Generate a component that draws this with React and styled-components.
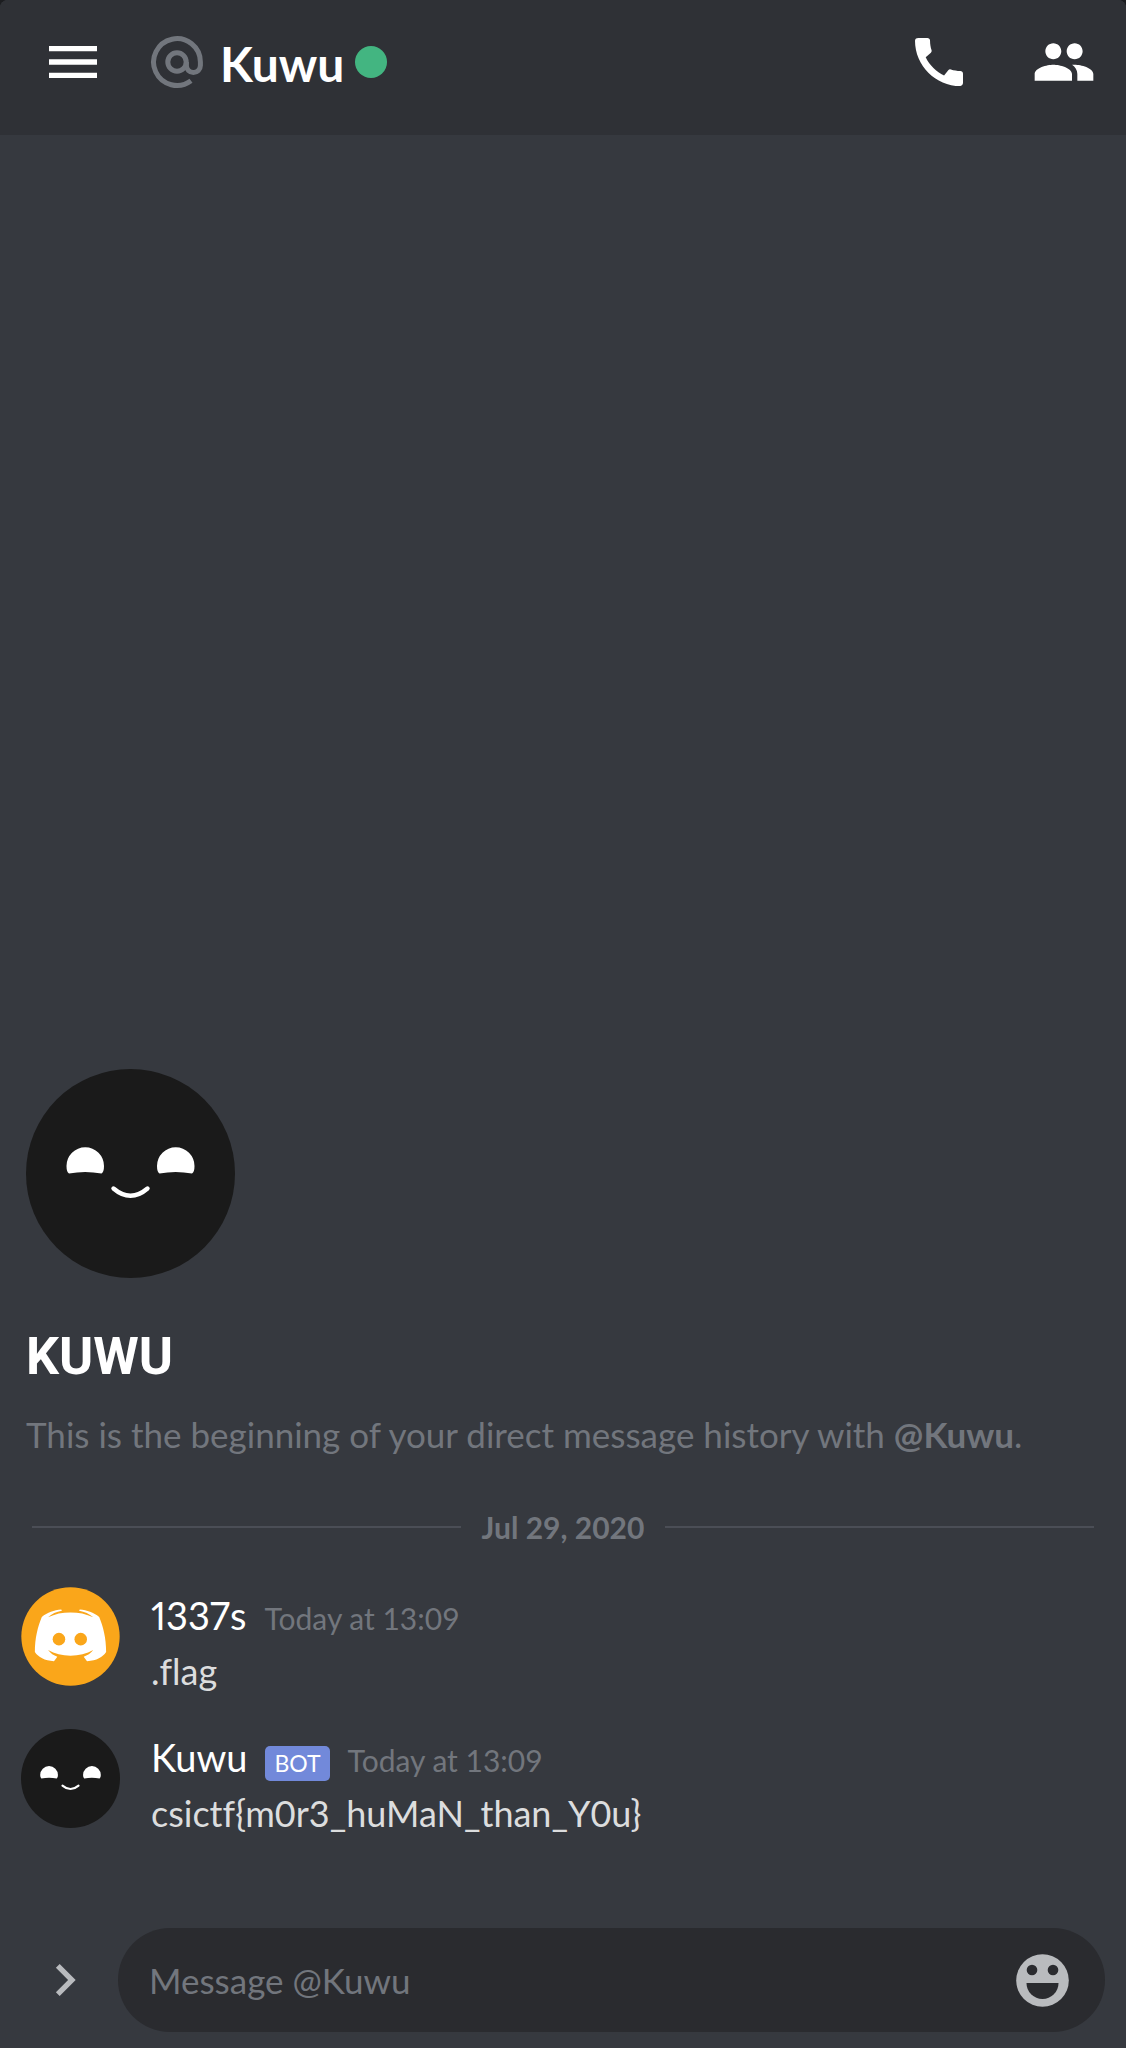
import React from "react";
import styled, { createGlobalStyle } from "styled-components";
import { MdMenu, MdCall, MdPeople, MdChevronRight } from "react-icons/md";

const color = {
  header: "#2f3136",
  chat: "#36393f",
  field: "#2a2b2f",
  rule: "#4b4e56",
  muted: "#72767d",
  text: "#dcddde",
  icon: "#b9bbbe",
  white: "#ffffff",
  online: "#43b581",
  blurple: "#7289da",
  amber: "#faa61a",
  ink: "#1a1a1a",
};

const GlobalStyle = createGlobalStyle`
  *, *::before, *::after { box-sizing: border-box; }
  body {
    margin: 0;
    background: #1c1d20;
    color: ${color.text};
    font-family: Lato, "Open Sans", sans-serif;
    font-variant-ligatures: none;
  }
`;

const Screen = styled.div`
  display: flex;
  flex-direction: column;
  min-height: 100vh;
  overflow: hidden;
  border-radius: 8px 8px 0 0;
  background: ${color.chat};
`;

const Header = styled.header`
  display: flex;
  align-items: center;
  gap: 40px;
  padding: 30px 30px 41px 41px;
  background: ${color.header};
`;

const IconButton = styled.button`
  display: flex;
  flex: none;
  padding: 0;
  border: 0;
  background: none;
  color: ${(p) => p.$tone || color.white};
  cursor: pointer;

  svg {
    display: block;
    width: ${(p) => p.$size || 64}px;
    height: ${(p) => p.$size || 64}px;
  }
`;

const Channel = styled.div`
  display: flex;
  flex: 1;
  align-items: center;
  gap: 11px;
`;

const AtSign = styled.svg`
  width: 64px;
  height: 64px;
  fill: none;
  stroke: ${color.muted};
  stroke-width: 5;
`;

const ChannelName = styled.h1`
  margin: 0;
  padding-top: 4px;
  color: ${color.white};
  font-size: 48px;
  line-height: 58px;
  font-weight: 700;
`;

const StatusDot = styled.span`
  width: 32px;
  height: 32px;
  border-radius: 50%;
  background: ${color.online};
`;

const Actions = styled.div`
  display: flex;
  gap: 61px;
`;

const Chat = styled.main`
  display: flex;
  flex: 1;
  flex-direction: column;
  justify-content: flex-end;
  padding-bottom: 91px;
`;

const Intro = styled.section`
  padding: 0 26px;
`;

const Avatar = styled.svg`
  display: block;
  flex: none;
  width: ${(p) => p.$size}px;
  height: ${(p) => p.$size}px;
`;

const IntroTitle = styled.h2`
  margin: 47px 0 23px;
  color: ${color.white};
  font-family: Roboto, sans-serif;
  font-size: 52px;
  line-height: 64px;
  font-weight: 700;
  text-transform: uppercase;
`;

const IntroText = styled.p`
  margin: 0;
  color: ${color.muted};
  font-size: 35px;
  line-height: 44px;
`;

const DateDivider = styled.div`
  display: flex;
  align-items: center;
  gap: 21px;
  margin: 53px 32px 42px;
  color: ${color.muted};
  font-size: 30px;
  line-height: 36px;
  font-weight: 700;

  &::before,
  &::after {
    content: "";
    flex: 1;
    height: 2px;
    background: ${color.rule};
  }
`;

const MessageList = styled.ol`
  display: flex;
  flex-direction: column;
  gap: 34px;
  margin: 0;
  padding: 0 21px;
  list-style: none;
`;

const MessageRow = styled.li`
  display: flex;
  align-items: flex-start;
  gap: 31px;
`;

const MessageBody = styled.div`
  display: flex;
  flex-direction: column;
  gap: 8px;
  padding-top: 4px;
`;

const Meta = styled.div`
  display: flex;
  align-items: baseline;
  gap: 18px;
  height: 48px;
  line-height: 48px;
`;

const Author = styled.span`
  color: ${color.white};
  font-size: 38px;
  font-variant-numeric: proportional-nums;
`;

const BotTag = styled.span`
  padding: 0 9px;
  border-radius: 5px;
  background: ${color.blurple};
  color: ${color.white};
  font-size: 23px;
  line-height: 35px;
`;

const Time = styled.time`
  color: ${color.muted};
  font-size: 30px;
`;

const MessageText = styled.p`
  margin: 0;
  font-size: 36px;
  line-height: 48px;
`;

const Composer = styled.form`
  display: flex;
  align-items: center;
  gap: 21px;
  padding: 0 21px 16px 33px;
`;

const Field = styled.div`
  display: flex;
  flex: 1;
  align-items: center;
  height: 104px;
  padding: 0 36px 0 31px;
  border-radius: 52px;
  background: ${color.field};
`;

const MessageInput = styled.input`
  flex: 1;
  min-width: 0;
  padding: 0;
  border: 0;
  outline: 0;
  background: none;
  color: ${color.text};
  font-family: inherit;
  font-size: 35px;
  line-height: 48px;

  &::placeholder {
    color: ${color.muted};
    opacity: 1;
  }
`;

function KuwuAvatar({ size }) {
  return (
    <Avatar $size={size} viewBox="0 0 209 209" role="img" aria-label="Kuwu">
      <circle cx="104.5" cy="104.5" r="104.5" fill={color.ink} />
      <g fill="#fff">
        <path d="M43 104.500Q40.500 103 40.500 97A18.700 18.700 0 0 1 78 97Q78 103 75.500 104.500Q59 101.500 43 104.500Z" />
        <path d="M133.500 104.500Q131 103 131 97A18.700 18.700 0 0 1 168.500 97Q168.500 103 166 104.500Q149.500 101.500 133.500 104.500Z" />
      </g>
      <path
        d="M87.500 119.500Q104.500 134 121.500 119.500"
        fill="none"
        stroke="#fff"
        strokeWidth="4.400"
        strokeLinecap="round"
      />
    </Avatar>
  );
}

function DefaultAvatar({ size }) {
  return (
    <Avatar $size={size} viewBox="15 15 300 300" role="img" aria-label="1337s">
      <circle cx="165" cy="165" r="149" fill={color.amber} />
      <path
        fill="#fff"
        d="M57 212C57 170 66 135 78 106C95 91 115 85 137 83L139 87C122 90 108 96 97 107C118 96 140 92 165 92C190 92 212 96 234 107C222 96 208 90 191 87L193 83C215 85 235 91 252 106C264 135 273 170 273 212C262 228 245 238 215 240L205 226C216 223 226 216 234 206C214 217 190 223 165 223C140 223 117 217 97 206C105 216 114 223 125 226L115 240C86 238 68 228 57 212Z"
      />
      <circle cx="130" cy="173" r="19" fill={color.amber} />
      <circle cx="196" cy="173" r="19" fill={color.amber} />
    </Avatar>
  );
}

function SmileIcon() {
  return (
    <svg viewBox="0 0 53 53" aria-hidden="true">
      <circle cx="26.500" cy="26.500" r="26.300" fill={color.icon} />
      <g fill={color.field}>
        <circle cx="16" cy="16" r="5.300" />
        <circle cx="37" cy="16" r="5.300" />
        <path d="M10.500 29H42.500A16 16 0 0 1 10.500 29Z" />
      </g>
    </svg>
  );
}

const messages = [
  { id: 1, author: "1337s", picture: DefaultAvatar, time: "Today at 13:09", text: ".flag" },
  {
    id: 2,
    author: "Kuwu",
    bot: true,
    picture: KuwuAvatar,
    time: "Today at 13:09",
    text: "csictf{m0r3_huMaN_than_Y0u}",
  },
];

function Message({ author, bot, picture: Picture, time, text }) {
  return (
    <MessageRow>
      <Picture size={99} />
      <MessageBody>
        <Meta>
          <Author>{author}</Author>
          {bot && <BotTag>BOT</BotTag>}
          <Time>{time}</Time>
        </Meta>
        <MessageText>{text}</MessageText>
      </MessageBody>
    </MessageRow>
  );
}

export default function App() {
  return (
    <Screen>
      <GlobalStyle />
      <Header>
        <IconButton type="button" aria-label="Open menu">
          <MdMenu />
        </IconButton>
        <Channel>
          <AtSign viewBox="-6 -6 64 64" aria-hidden="true">
            <circle cx="26" cy="26" r="9.200" />
            <path d="M40 44.800A23.400 23.400 0 1 1 49.400 26V29.500A7 7 0 0 1 35.400 29.500V26" />
          </AtSign>
          <ChannelName>Kuwu</ChannelName>
          <StatusDot role="img" aria-label="Online" />
        </Channel>
        <Actions>
          <IconButton type="button" aria-label="Start voice call">
            <MdCall />
          </IconButton>
          <IconButton type="button" aria-label="Members">
            <MdPeople />
          </IconButton>
        </Actions>
      </Header>

      <Chat>
        <Intro>
          <KuwuAvatar size={209} />
          <IntroTitle>Kuwu</IntroTitle>
          <IntroText>
            This is the beginning of your direct message history with <strong>@Kuwu</strong>.
          </IntroText>
        </Intro>
        <DateDivider>Jul 29, 2020</DateDivider>
        <MessageList>
          {messages.map((m) => (
            <Message key={m.id} {...m} />
          ))}
        </MessageList>
      </Chat>

      <Composer onSubmit={(e) => e.preventDefault()}>
        <IconButton type="button" aria-label="More options" $tone={color.icon}>
          <MdChevronRight />
        </IconButton>
        <Field>
          <MessageInput type="text" aria-label="Message @Kuwu" placeholder="Message @Kuwu" />
          <IconButton type="button" aria-label="Emoji" $size={53}>
            <SmileIcon />
          </IconButton>
        </Field>
      </Composer>
    </Screen>
  );
}
